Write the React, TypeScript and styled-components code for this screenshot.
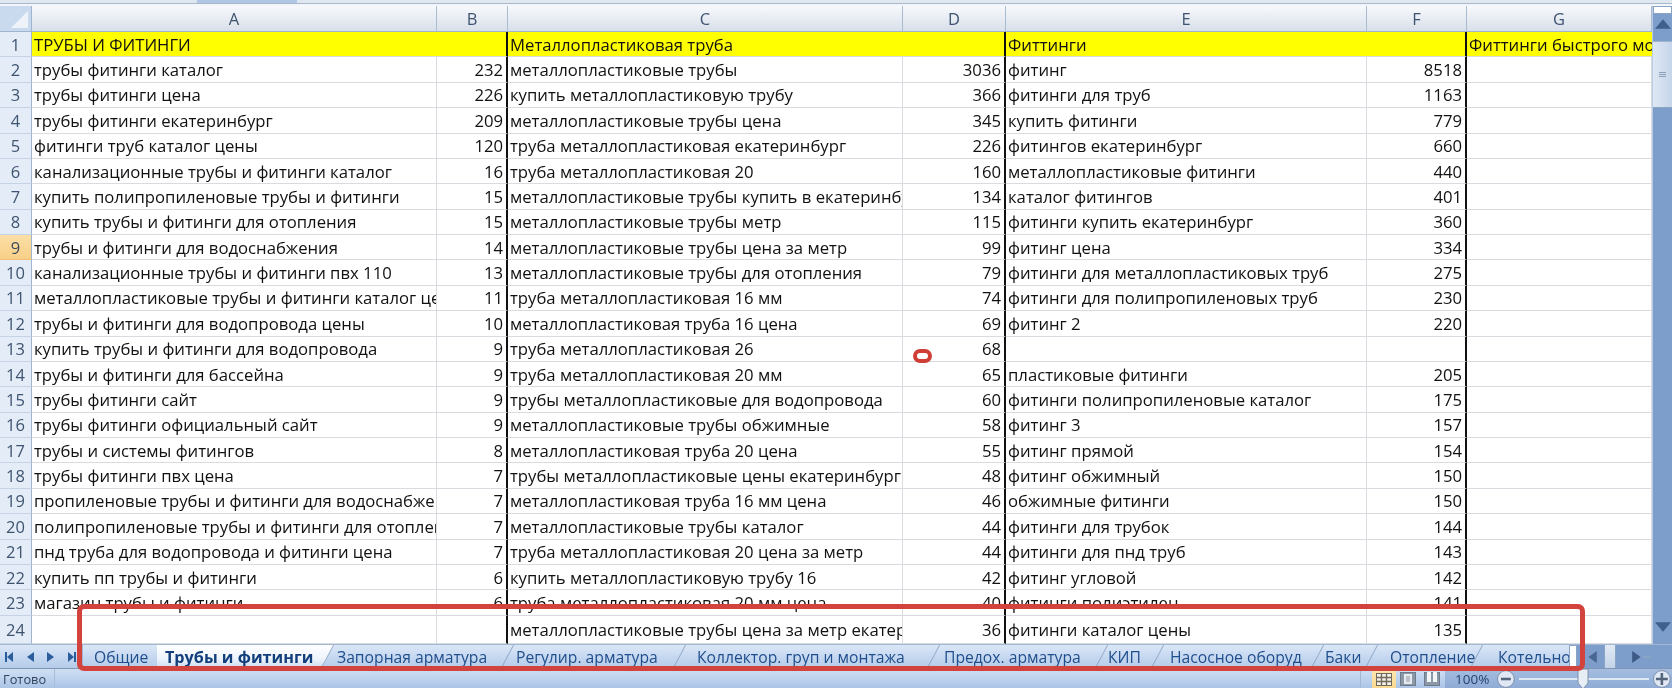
import { Fragment } from 'react';
import styled, { createGlobalStyle, css } from 'styled-components';

/* ─── Data ─── */
const columns = ['A', 'B', 'C', 'D', 'E', 'F', 'G'];

const rows: (string | number)[][] = [
  ['трубы фитинги каталог', 232, 'металлопластиковые трубы', 3036, 'фитинг', 8518],
  ['трубы фитинги цена', 226, 'купить металлопластиковую трубу', 366, 'фитинги для труб', 1163],
  ['трубы фитинги екатеринбург', 209, 'металлопластиковые трубы цена', 345, 'купить фитинги', 779],
  ['фитинги труб каталог цены', 120, 'труба металлопластиковая екатеринбург', 226, 'фитингов екатеринбург', 660],
  ['канализационные трубы и фитинги каталог', 16, 'труба металлопластиковая 20', 160, 'металлопластиковые фитинги', 440],
  ['купить полипропиленовые трубы и фитинги', 15, 'металлопластиковые трубы купить в екатеринбурге', 134, 'каталог фитингов', 401],
  ['купить трубы и фитинги для отопления', 15, 'металлопластиковые трубы метр', 115, 'фитинги купить екатеринбург', 360],
  ['трубы и фитинги для водоснабжения', 14, 'металлопластиковые трубы цена за метр', 99, 'фитинг цена', 334],
  ['канализационные трубы и фитинги пвх 110', 13, 'металлопластиковые трубы для отопления', 79, 'фитинги для металлопластиковых труб', 275],
  ['металлопластиковые трубы и фитинги каталог цены', 11, 'труба металлопластиковая 16 мм', 74, 'фитинги для полипропиленовых труб', 230],
  ['трубы и фитинги для водопровода цены', 10, 'металлопластиковая труба 16 цена', 69, 'фитинг 2', 220],
  ['купить трубы и фитинги для водопровода', 9, 'труба металлопластиковая 26', 68, '', ''],
  ['трубы и фитинги для бассейна', 9, 'труба металлопластиковая 20 мм', 65, 'пластиковые фитинги', 205],
  ['трубы фитинги сайт', 9, 'трубы металлопластиковые для водопровода', 60, 'фитинги полипропиленовые каталог', 175],
  ['трубы фитинги официальный сайт', 9, 'металлопластиковые трубы обжимные', 58, 'фитинг 3', 157],
  ['трубы и системы фитингов', 8, 'металлопластиковая труба 20 цена', 55, 'фитинг прямой', 154],
  ['трубы фитинги пвх цена', 7, 'трубы металлопластиковые цены екатеринбург', 48, 'фитинг обжимный', 150],
  ['пропиленовые трубы и фитинги для водоснабжения', 7, 'металлопластиковая труба 16 мм цена', 46, 'обжимные фитинги', 150],
  ['полипропиленовые трубы и фитинги для отопления', 7, 'металлопластиковые трубы каталог', 44, 'фитинги для трубок', 144],
  ['пнд труба для водопровода и фитинги цена', 7, 'труба металлопластиковая 20 цена за метр', 44, 'фитинги для пнд труб', 143],
  ['купить пп трубы и фитинги', 6, 'купить металлопластиковую трубу 16', 42, 'фитинг угловой', 142],
  ['магазин трубы и фитинги', 6, 'труба металлопластиковая 20 мм цена', 40, 'фитинги полиэтилен', 141],
  ['', '', 'металлопластиковые трубы цена за метр екатеринбург', 36, 'фитинги каталог цены', 135],
];

const titles = ['ТРУБЫ И ФИТИНГИ', '', 'Металлопластиковая труба', '', 'Фиттинги', '', 'Фиттинги быстрого монтажа'];

const tabs = [
  { label: 'Общие', width: 74, pad: 11 },
  { label: 'Трубы и фитинги', width: 165, pad: 8, active: true },
  { label: 'Запорная арматура', width: 180, pad: 15 },
  { label: 'Регулир. арматура', width: 172, pad: 14 },
  { label: 'Коллектор. груп и монтажа', width: 254, pad: 23 },
  { label: 'Предох. арматура', width: 168, pad: 16 },
  { label: 'КИП', width: 56, pad: 12 },
  { label: 'Насосное оборуд', width: 160, pad: 18 },
  { label: 'Баки', width: 54, pad: 13 },
  { label: 'Отопление', width: 105, pad: 24 },
  { label: 'Котельное', width: 98, pad: 27 },
];

/* ─── Page ─── */
const GlobalStyle = createGlobalStyle`
  html, body {
    margin: 0;
    padding: 0;
    background: #fff;
    overflow: hidden;
  }
`;

const Page = styled.div`
  position: relative;
  width: 1672px;
  height: 688px;
  display: flex;
  flex-direction: column;
  overflow: hidden;
  font-family: 'Open Sans', 'Noto Sans', sans-serif;
  filter: blur(0.4px);
`;

const TopStrip = styled.div`
  height: 6px;
  flex: none;
  box-sizing: border-box;
  background: linear-gradient(#dfe7f1 0 3px, #a9b8ca 3px 4px, #f2f5f9 4px);
  padding-left: 197px;
`;

const RibbonEdge = styled.div`
  width: 100px;
  height: 3px;
  background: #afc6e4;
`;

const Workspace = styled.div`
  display: flex;
  height: 638px;
  flex: none;
`;

/* ─── Grid ─── */
const Sheet = styled.div`
  width: 1652px;
  flex: none;
  display: grid;
  grid-template-columns: 32px 405px 71px 395px 103px 361px 100px 185px;
  grid-template-rows: 26px repeat(23, 25.38px) 1fr;
  overflow: hidden;
  background: #fff;
`;

const Corner = styled.div`
  position: relative;
  background: #c9daef;
  border-right: 1px solid #9fb4cd;
  border-bottom: 1px solid #9fb4cd;
  &::after {
    content: '';
    position: absolute;
    right: 3px;
    bottom: 3px;
    width: 17px;
    height: 17px;
    background: #eef3f9;
    clip-path: polygon(100% 0, 100% 100%, 0 100%);
  }
`;

const ColHead = styled.div`
  box-sizing: border-box;
  display: flex;
  align-items: center;
  justify-content: center;
  font-size: 16.5px;
  color: #3f5470;
  background: linear-gradient(#f7f9fc, #e6ebf2 55%, #d8dfe9);
  border-right: 1px solid #a9bbd0;
  border-bottom: 1px solid #9fb4cd;
`;

const RowHead = styled.div<{ $on?: boolean }>`
  box-sizing: border-box;
  display: flex;
  align-items: center;
  justify-content: center;
  font-size: 16.5px;
  color: ${(p) => (p.$on ? '#3c4a5c' : '#3f5470')};
  background: ${(p) => (p.$on ? 'linear-gradient(#fbdfa6, #f8cf87)' : '#e4ecf7')};
  border-right: 1px solid #9fb4cd;
  border-bottom: 1px solid ${(p) => (p.$on ? '#f0c078' : '#c5d3e4')};
`;

const Cell = styled.div<{ $num?: boolean; $edge?: boolean; $title?: boolean }>`
  box-sizing: border-box;
  min-width: 0;
  display: flex;
  align-items: center;
  justify-content: ${(p) => (p.$num ? 'flex-end' : 'flex-start')};
  overflow: hidden;
  white-space: nowrap;
  padding: ${(p) => (p.$num ? '0 3px 0 0' : '0 0 0 2px')};
  font-size: 16.7px;
  color: #111;
  background: ${(p) => (p.$title ? '#ffff00' : '#fff')};
  border-bottom: 1px solid #d8dbdf;
  border-right: ${(p) => (p.$edge ? '2px solid #111' : p.$title ? 'none' : '1px solid #d8dbdf')};
`;

/* ─── Vertical scrollbar ─── */
const VScroll = styled.div`
  flex: 1;
  display: flex;
  flex-direction: column;
  align-items: center;
  background: #7d9dcb;
  border-left: 1px solid #b9cbe2;
`;

const VSplit = styled.div`
  box-sizing: border-box;
  width: 100%;
  height: 8px;
  background: #fff;
  border: 1px solid #8aa4c6;
`;

const VThumb = styled.div`
  width: 100%;
  height: 65px;
  margin-top: 8px;
  display: flex;
  align-items: center;
  justify-content: center;
  background: linear-gradient(90deg, #dfe8f4, #c5d5ea);
  border-top: 1px solid #9fb4cd;
  border-bottom: 1px solid #8aa4c6;
`;

const Grip = styled.div`
  width: 7px;
  height: 6px;
  background: repeating-linear-gradient(#8ca0ba 0 1px, transparent 1px 2px);
`;

const ArrowSlot = styled.div<{ $end?: boolean; $h?: number }>`
  height: ${(p) => p.$h ?? 16}px;
  display: flex;
  align-items: center;
  margin-top: ${(p) => (p.$end ? 'auto' : '0')};
  margin-bottom: ${(p) => (p.$end ? '9px' : '0')};
`;

/* ─── Tab row ─── */
const TabRow = styled.div`
  display: flex;
  height: 25px;
  flex: none;
  box-sizing: border-box;
  border-top: 1px solid #a3b7d0;
  border-bottom: 1px solid #7f95b2;
  background: linear-gradient(#dbe7f7, #c4d7f0 55%, #b4cbe9);
`;

const SheetNav = styled.div`
  width: 83px;
  flex: none;
  box-sizing: border-box;
  display: flex;
  align-items: center;
  gap: 11px;
  padding-left: 4px;
  border-right: 1px solid #a3b7d0;
`;

const TabStrip = styled.div`
  width: 1486px;
  flex: none;
  display: flex;
  overflow: hidden;
`;

const activeTab = css`
  font-size: 16.2px;
  font-weight: 700;
  color: #123f7c;
  background: linear-gradient(#ffffff, #eef4fc 60%, #c9daf0);
  &::before {
    content: '';
    position: absolute;
    left: 100%;
    top: 0;
    bottom: 0;
    width: 12px;
    background: linear-gradient(#ffffff, #eef4fc 60%, #c9daf0);
    clip-path: polygon(0 0, 100% 0, 0 100%);
  }
`;

const Tab = styled.div<{ $w: number; $pad: number; $active?: boolean }>`
  position: relative;
  flex: none;
  width: ${(p) => p.$w}px;
  padding-left: ${(p) => p.$pad}px;
  box-sizing: border-box;
  display: flex;
  align-items: center;
  white-space: nowrap;
  font-size: 15.7px;
  color: #1f4e8c;
  &::after {
    content: '';
    position: absolute;
    right: -6px;
    top: 0;
    bottom: 0;
    width: 1px;
    background: #8fa7c6;
    transform: skewX(-28deg);
  }
  ${(p) => p.$active && activeTab}
`;

const Splitter = styled.div`
  width: 8px;
  flex: none;
  box-sizing: border-box;
  background: #fff;
  border: 1px solid #8aa4c6;
`;

const HScroll = styled.div`
  flex: 1;
  display: flex;
  align-items: center;
  background: #7d9dcb;
`;

const HTrack = styled.div`
  width: 66px;
  flex: none;
  height: 100%;
  display: flex;
  align-items: center;
  padding-left: 9px;
  box-sizing: border-box;
`;

const HThumb = styled.div`
  width: 12px;
  height: 100%;
  margin: 0 15px 0 6px;
  background: linear-gradient(#e2eaf5, #c3d3e8);
  border-left: 1px solid #8aa4c6;
  border-right: 1px solid #8aa4c6;
  box-sizing: border-box;
`;

/* ─── Status bar ─── */
const StatusBar = styled.div`
  flex: 1;
  display: flex;
  background: linear-gradient(#cfdff3, #bdd2ee 50%, #a9c3e6);
`;

const StatusText = styled.div`
  width: 55px;
  box-sizing: border-box;
  padding-left: 3px;
  display: flex;
  align-items: center;
  font-size: 12.8px;
  color: #31425a;
  border-right: 1px solid #a9bdd8;
`;

const ViewGroup = styled.div`
  margin-left: auto;
  width: 85px;
  box-sizing: border-box;
  display: flex;
  align-items: stretch;
  padding-left: 11px;
  border-left: 1px solid #a3b7d3;
`;

const ViewBtn = styled.div<{ $on?: boolean }>`
  width: 24px;
  display: flex;
  align-items: center;
  justify-content: center;
  background: ${(p) => (p.$on ? 'linear-gradient(#fde7b2, #fbd98d)' : 'transparent')};
`;

const ZoomGroup = styled.div`
  width: 227px;
  box-sizing: border-box;
  display: flex;
  align-items: center;
  padding: 0 0 0 10px;
  background: linear-gradient(#a4bde0, #8eaad5);
`;

const ZoomValue = styled.div`
  width: 42px;
  font-size: 13.5px;
  color: #24456f;
`;

const SliderTrack = styled.div`
  position: relative;
  width: 130px;
  flex: none;
  height: 2px;
  margin: 0 3px;
  background: #dfe8f5;
`;

const SliderThumb = styled.svg`
  position: absolute;
  left: 58px;
  top: -10px;
`;

/* ─── Marks drawn over the sheet ─── */
const RedFrame = styled.div`
  position: absolute;
  left: 77px;
  top: 604px;
  width: 1508px;
  height: 67px;
  box-sizing: border-box;
  border: 5px solid #d1433c;
  border-radius: 7px;
`;

const RedPill = styled.div`
  position: absolute;
  left: 913px;
  top: 349px;
  width: 19px;
  height: 14px;
  box-sizing: border-box;
  border: 4px solid #cf3f36;
  border-radius: 7px;
`;

/* ─── Icons ─── */
function Tri({ dir, size = 10, color = '#2b5d9c' }: { dir: 'l' | 'r' | 'u' | 'd'; size?: number; color?: string }) {
  const pts = { l: '9,0 9,10 2,5', r: '1,0 1,10 8,5', u: '0,8 10,8 5,2', d: '0,2 10,2 5,8' }[dir];
  return (
    <svg width={size} height={size} viewBox="0 0 10 10">
      <polygon points={pts} fill={color} />
    </svg>
  );
}

function NavFirst() {
  return (
    <svg width="10" height="12" viewBox="0 0 10 12">
      <rect x="1" y="1" width="2" height="10" fill="#2b5d9c" />
      <polygon points="9,1 9,11 3,6" fill="#2b5d9c" />
    </svg>
  );
}

function NavLast() {
  return (
    <svg width="10" height="12" viewBox="0 0 10 12">
      <rect x="7" y="1" width="2" height="10" fill="#2b5d9c" />
      <polygon points="1,1 1,11 7,6" fill="#2b5d9c" />
    </svg>
  );
}

function GridIcon() {
  return (
    <svg width="16" height="13" viewBox="0 0 16 13">
      <rect x="0.5" y="0.5" width="15" height="12" fill="#f5f2e8" stroke="#6f6a5c" />
      <path d="M5.5 1V12M10.5 1V12M1 4.5H15M1 8.5H15" stroke="#6f6a5c" strokeWidth="1.4" />
    </svg>
  );
}

function PageIcon() {
  return (
    <svg width="16" height="14" viewBox="0 0 16 14">
      <rect x="0.5" y="0.5" width="15" height="13" fill="#8b98a8" stroke="#6c7a8c" />
      <rect x="4" y="2" width="8" height="10" fill="#e6e9ee" />
      <path d="M6 5H10M6 7H10M6 9H10" stroke="#8b98a8" />
    </svg>
  );
}

function BreakIcon() {
  return (
    <svg width="16" height="14" viewBox="0 0 16 14">
      <rect x="0.5" y="0.5" width="15" height="13" fill="#8b98a8" stroke="#6c7a8c" />
      <rect x="3" y="0" width="4" height="10" fill="#f2f4f7" />
      <rect x="9" y="0" width="4" height="10" fill="#f2f4f7" />
    </svg>
  );
}

function ZoomBtn({ plus }: { plus?: boolean }) {
  return (
    <svg width="20" height="20" viewBox="0 0 20 20">
      <circle cx="10" cy="10" r="8.5" fill="#dfe8f4" stroke="#7c8ea8" />
      <path d={plus ? 'M4 10H16M10 4V16' : 'M5 10H15'} stroke="#55657c" strokeWidth="2.6" />
    </svg>
  );
}

/* ─── Main ─── */
export default function App() {
  return (
    <>
      <GlobalStyle />
      <Page>
        <TopStrip>
          <RibbonEdge />
        </TopStrip>

        <Workspace>
          <Sheet>
            <Corner />
            {columns.map((c) => (
              <ColHead key={c}>{c}</ColHead>
            ))}

            <RowHead>1</RowHead>
            {titles.map((t, i) => (
              <Cell key={i} $title $edge={i % 2 === 1}>
                {t}
              </Cell>
            ))}

            {rows.map((row, r) => (
              <Fragment key={r}>
                <RowHead $on={r + 2 === 9}>{r + 2}</RowHead>
                {row.map((v, i) => (
                  <Cell key={i} $num={i % 2 === 1} $edge={i % 2 === 1}>
                    {v}
                  </Cell>
                ))}
                <Cell />
              </Fragment>
            ))}
          </Sheet>

          <VScroll>
            <VSplit />
            <ArrowSlot $h={19}>
              <Tri dir="u" size={16} color="#3f5f8c" />
            </ArrowSlot>
            <VThumb>
              <Grip />
            </VThumb>
            <ArrowSlot $end>
              <Tri dir="d" size={16} color="#3f5f8c" />
            </ArrowSlot>
          </VScroll>
        </Workspace>

        <TabRow>
          <SheetNav>
            <NavFirst />
            <Tri dir="l" />
            <Tri dir="r" />
            <NavLast />
          </SheetNav>
          <TabStrip>
            {tabs.map((t) => (
              <Tab key={t.label} $w={t.width} $pad={t.pad} $active={t.active}>
                {t.label}
              </Tab>
            ))}
          </TabStrip>
          <Splitter />
          <HScroll>
            <HTrack>
              <Tri dir="l" size={12} color="#4a6791" />
              <HThumb />
              <Tri dir="r" size={12} color="#3d5a85" />
            </HTrack>
            <Splitter />
          </HScroll>
        </TabRow>

        <StatusBar>
          <StatusText>Готово</StatusText>
          <ViewGroup>
            <ViewBtn $on>
              <GridIcon />
            </ViewBtn>
            <ViewBtn>
              <PageIcon />
            </ViewBtn>
            <ViewBtn>
              <BreakIcon />
            </ViewBtn>
          </ViewGroup>
          <ZoomGroup>
            <ZoomValue>100%</ZoomValue>
            <ZoomBtn />
            <SliderTrack>
              <SliderThumb width="12" height="22" viewBox="0 0 12 22">
                <path d="M1 1H11V15L6 21L1 15Z" fill="#e8eef6" stroke="#7f90a8" />
              </SliderThumb>
            </SliderTrack>
            <ZoomBtn plus />
          </ZoomGroup>
        </StatusBar>

        <RedFrame />
        <RedPill />
      </Page>
    </>
  );
}
